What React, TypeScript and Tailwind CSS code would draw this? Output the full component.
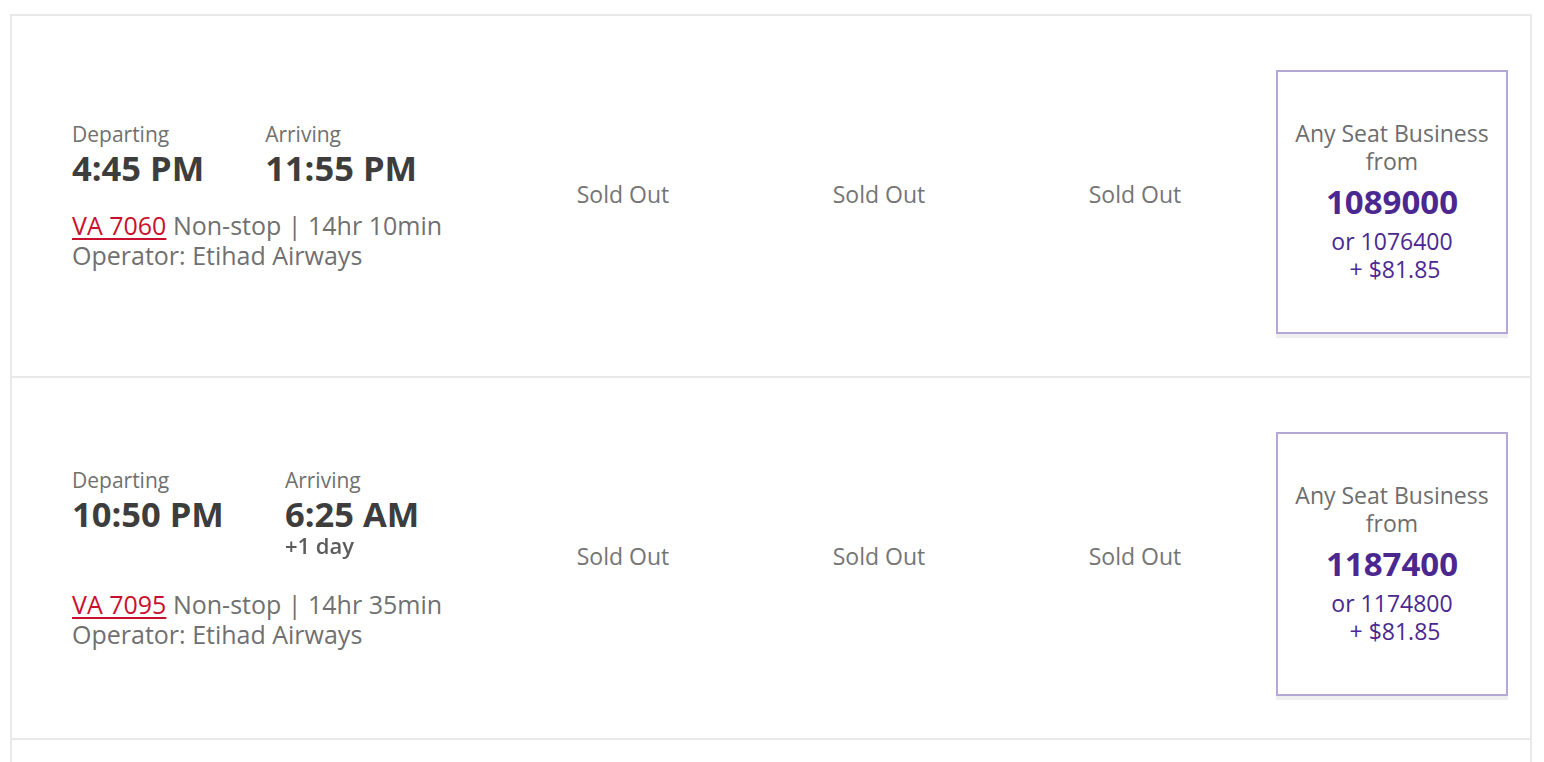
import React from "react";

type Flight = {
  number: string;
  depart: string;
  arrive: string;
  nextDay?: boolean;
  duration: string;
  operator: string;
  points: string;
  altPoints: string;
  cash: string;
};

const flights: Flight[] = [
  {
    number: "VA 7060",
    depart: "4:45 PM",
    arrive: "11:55 PM",
    duration: "14hr 10min",
    operator: "Etihad Airways",
    points: "1089000",
    altPoints: "1076400",
    cash: "$81.85",
  },
  {
    number: "VA 7095",
    depart: "10:50 PM",
    arrive: "6:25 AM",
    nextDay: true,
    duration: "14hr 35min",
    operator: "Etihad Airways",
    points: "1187400",
    altPoints: "1174800",
    cash: "$81.85",
  },
];

function SoldOut() {
  return (
    <div className="w-[256px] pb-[3px] flex items-center justify-center text-[23px] text-[#757575]">
      Sold Out
    </div>
  );
}

function FareBox({ flight }: { flight: Flight }) {
  return (
    <div className="w-[256px] pt-[54px] pl-[13px]">
      <button className="w-[232px] h-[264px] pb-[2px] border-2 border-[#b4a9d6] bg-white shadow-[0_4px_0_#efefef] flex flex-col items-center justify-center text-center">
        <span className="text-[23px] leading-[28px] text-[#6d6d6d]">
          Any Seat Business
          <br />
          from
        </span>
        <span className="mt-[7px] mb-[5px] text-[33px] leading-[40px] font-bold text-[#4b2890]">
          {flight.points}
        </span>
        <span className="text-[23px] leading-[28px] text-[#4b2890]">
          or {flight.altPoints}
          <br />
          {"\u00a0+ "}
          {flight.cash}
        </span>
      </button>
    </div>
  );
}

function FlightRow({ flight, first }: { flight: Flight; first: boolean }) {
  return (
    <div
      className={`flex border-x-2 border-b-2 border-[#e9e9e9] ${
        first ? "h-[364px] border-t-2" : "h-[362px]"
      }`}
    >
      {/* times and flight details */}
      <div className="flex-1 pl-[60px] flex flex-col justify-center">
        <div className="flex gap-[61px]">
          <div>
            <div className="text-[21px] leading-[24px] text-[#707070]">Departing</div>
            <div className="pt-[1px] text-[34.5px] leading-[42px] font-bold text-[#3d3d3d]">
              {flight.depart}
            </div>
          </div>
          <div>
            <div className="text-[21px] leading-[24px] text-[#707070]">Arriving</div>
            <div className="pt-[1px] text-[34.5px] leading-[42px] font-bold text-[#3d3d3d]">
              {flight.arrive}
            </div>
            {flight.nextDay && (
              <div className="mb-[13px] text-[22px] leading-[20px] font-semibold text-[#5c5c5c] blur-[0.6px]">
                +1 day
              </div>
            )}
          </div>
        </div>
        <div className="mt-[21px] text-[25px] leading-[30px] text-[#707070]">
          <a href="#" className="text-[#c8102e] underline underline-offset-[3px] decoration-[1.5px]">
            {flight.number}
          </a>{" "}
          Non-stop | {flight.duration}
        </div>
        <div className="text-[25px] leading-[30px] text-[#707070]">
          Operator: {flight.operator}
        </div>
      </div>
      <SoldOut />
      <SoldOut />
      <SoldOut />
      <div className="pr-[11px] flex">
        <FareBox flight={flight} />
      </div>
    </div>
  );
}

export default function App() {
  return (
    <div
      className="min-h-screen bg-white pt-[14px] pl-[10px] pr-[12px]"
      style={{ fontFamily: '"Open Sans", "Liberation Sans", sans-serif' }}
    >
      <div className="w-[1522px]">
        {flights.map((f, i) => (
          <FlightRow key={f.number} flight={f} first={i === 0} />
        ))}
        <div className="h-[40px] border-x-2 border-[#e9e9e9]" />
      </div>
    </div>
  );
}
